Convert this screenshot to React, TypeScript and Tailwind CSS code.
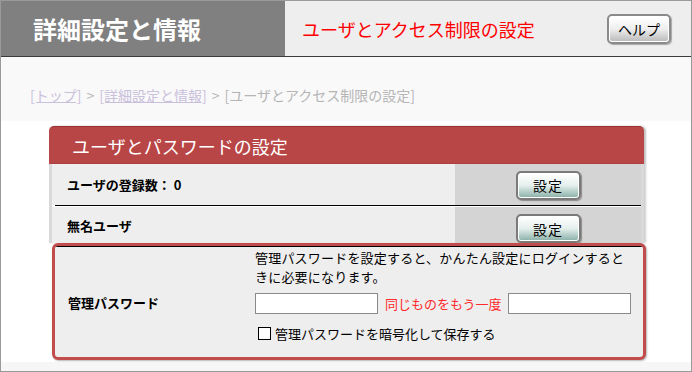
import React from "react";

const font = { fontFamily: '"Noto Sans CJK JP", "Noto Sans", sans-serif' };

function SetButton({ label }: { label: string }) {
  return (
    <div className="w-[65px] h-[29px] rounded-[5px] border-2 border-[#7a7a7a] shadow-[1px_1px_1px_rgba(0,0,0,0.35)] overflow-hidden">
      <div className="w-full h-full rounded-[3px] border border-white bg-gradient-to-b from-white via-[#e4efec] to-[#8fb4ac] flex items-center justify-center text-[14px] leading-none text-black tracking-[1px]">
        {label}
      </div>
    </div>
  );
}

export default function App() {
  return (
    <div
      style={font}
      className="w-[692px] h-[372px] border border-[#9a9a9a] bg-white overflow-hidden flex flex-col"
    >
      {/* header */}
      <div className="h-[56px] flex border-b border-[#3a3a3a] shrink-0">
        <div className="w-[284px] bg-[#808080] flex items-center pl-[32px]">
          <span className="text-white text-[24px] font-bold leading-none tracking-[0px]">
            詳細設定と情報
          </span>
        </div>
        <div className="flex-1 bg-[#eeeeee] flex items-center pl-[17px]">
          <span className="text-[#ff0000] text-[18px] leading-none">
            ユーザとアクセス制限の設定
          </span>
          <div className="ml-auto mr-[20px] mt-[1px] w-[64px] h-[30px] rounded-[5px] border-2 border-[#8a8a8a] shadow-[1px_1px_1px_rgba(0,0,0,0.3)] overflow-hidden">
            <div className="w-full h-full rounded-[3px] border border-white bg-gradient-to-b from-white via-[#eeeeee] to-[#bdbdbd] flex items-center justify-center text-[14px] leading-none text-black">
              ヘルプ
            </div>
          </div>
        </div>
      </div>

      {/* breadcrumb */}
      <div className="h-[64px] bg-[#f9f9f9] flex items-center pl-[29px] pt-[13px] text-[14px] text-[#b5b5b5] shrink-0">
        <span className="underline text-[#c9c0dc]">[トップ]</span>
        <span className="mx-[5px]">&gt;</span>
        <span className="underline text-[#c9c0dc]">[詳細設定と情報]</span>
        <span className="mx-[5px]">&gt;</span>
        <span>[ユーザとアクセス制限の設定]</span>
      </div>

      {/* content */}
      <div className="flex-1 bg-white flex flex-col">
        <div className="ml-[48px] mt-[5px] w-[597px] flex flex-col">
          {/* panel header */}
          <div className="h-[38px] mr-[2px] rounded-t-[5px] bg-[#b94646] border-t border-[#9c3434] shadow-[2px_0_2px_rgba(0,0,0,0.25)] flex items-center pl-[23px]">
            <span className="text-white text-[18px] leading-none">ユーザとパスワードの設定</span>
          </div>
          {/* rows */}
          <div className="mr-[2px] border-l-[3px] border-r-[3px] border-[#d9d9d9] shadow-[2px_0_2px_rgba(0,0,0,0.2)]">
            <div className="h-[41px] flex">
              <div className="flex-1 bg-[#eeeeee] flex items-center pl-[15px] text-[13px] font-bold text-black">
                ユーザの登録数：&nbsp;0
              </div>
              <div className="w-[186px] bg-[#d4d4d4] flex items-center justify-center pt-[1px]">
                <SetButton label="設定" />
              </div>
            </div>
            <div className="h-[2px] bg-white ml-[3px] flex flex-col">
              <div className="h-[1px] bg-black" />
            </div>
            <div className="h-[36px] flex overflow-hidden">
              <div className="flex-1 bg-[#eeeeee] flex items-center pl-[15px] pt-[1px] text-[13px] font-bold text-black">
                無名ユーザ
              </div>
              <div className="w-[186px] bg-[#d4d4d4] flex justify-center pt-[7px]">
                <SetButton label="設定" />
              </div>
            </div>
          </div>
          {/* admin password box */}
          <div className="ml-[3px] w-[594px] rounded-[6px] border-[3px] border-[#c24c4c] bg-[#eeeeee] shadow-[1px_1px_2px_rgba(0,0,0,0.3)] overflow-hidden">
            <div className="border-t border-black flex h-[111px]">
              <div className="w-[200px] flex items-center pl-[13px] pt-[2px] text-[13px] font-bold text-black">
                管理パスワード
              </div>
              <div className="flex-1 flex flex-col pt-[1px] text-[13px] text-black">
                <div className="leading-[19px] tracking-[0.2px]">
                  管理パスワードを設定すると、かんたん設定にログインすると
                  <br />
                  きに必要になります。
                </div>
                <div className="flex items-center mt-[7px]">
                  <div className="w-[123px] h-[21px] bg-white border border-[#8a8a8a]" />
                  <span className="text-[#ff2a2a] ml-[7px] mr-[6px] leading-none">同じものをもう一度</span>
                  <div className="w-[123px] h-[21px] bg-white border border-[#8a8a8a]" />
                </div>
                <div className="flex items-center mt-[13px] pl-[3px]">
                  <div className="w-[13px] h-[13px] border border-black bg-white mr-[4px]" />
                  <span className="leading-none">管理パスワードを暗号化して保存する</span>
                </div>
              </div>
            </div>
          </div>
        </div>
        <div className="mt-auto h-[9px] bg-[#f6f6f6]" />
      </div>
    </div>
  );
}
